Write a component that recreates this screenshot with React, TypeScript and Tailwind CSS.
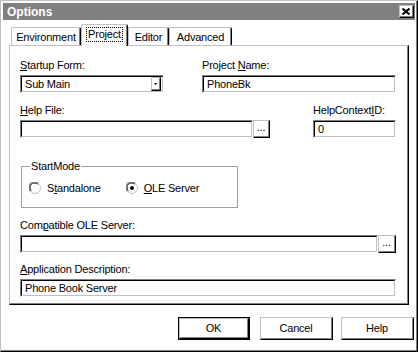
import React from "react";

// Win95-style "Options" dialog, Project tab

const Sunken: React.FC<{ className?: string; children?: React.ReactNode }> = ({ className = "", children }) => (
    <div className={`h-[18px] border-t border-l border-r border-b border-t-[#808080] border-l-[#808080] border-r-white border-b-white ${className}`}>
        <div className="h-full flex items-center pl-[2px] border-t border-l border-r border-b border-t-black border-l-black border-r-[#c0c0c0] border-b-[#c0c0c0] bg-white">
            {children}
        </div>
    </div>
);

const Raised: React.FC<{ className?: string; children?: React.ReactNode }> = ({ className = "", children }) => (
    <div className={`border-t border-l border-r border-b border-t-[#c0c0c0] border-l-[#c0c0c0] border-r-black border-b-black bg-white ${className}`}>
        <div className="h-full w-full flex items-center justify-center border-r border-b border-r-[#808080] border-b-[#808080]">
            {children}
        </div>
    </div>
);

const Label: React.FC<{ children: React.ReactNode; className?: string }> = ({ children, className = "" }) => (
    <div className={`text-[11px] leading-[13px] mb-[3px] ${className}`}>{children}</div>
);

const Radio: React.FC<{ checked?: boolean }> = ({ checked }) => (
    <svg width="12" height="12" viewBox="0 0 12 12" className="shrink-0">
        <circle cx="6" cy="6" r="5.5" fill="white" stroke="#c0c0c0" />
        <path d="M1.2 9.5 A5.5 5.5 0 0 1 9.5 1.2" fill="none" stroke="#808080" />
        <path d="M2.2 8.6 A4.4 4.4 0 0 1 8.6 2.2" fill="none" stroke="black" />
        {checked && <circle cx="6" cy="6" r="2" fill="black" />}
    </svg>
);

const Dots = () => <span className="text-[11px] leading-none -mt-[2px]">...</span>;

export default function App() {
    const tabs = [
        { name: "Environment", w: "w-[70px]" },
        { name: "Project", w: "w-[47px]", active: true },
        { name: "Editor", w: "w-[41px]" },
        { name: "Advanced", w: "w-[63px]" },
    ];

    return (
        <div className="w-[418px] h-[352px] bg-white text-black tracking-[-0.2px] font-['Liberation_Sans',Arial,sans-serif] border-t border-l border-r border-b border-t-[#c0c0c0] border-l-[#c0c0c0] border-r-black border-b-black">
            <div className="h-full pt-[2px] pl-[2px] pr-[1px] border-r border-b border-r-[#808080] border-b-[#808080]">
                {/* title bar */}
                <div className="h-[17px] bg-[#808080] flex items-center justify-between pl-[4px] pr-[1px]">
                    <span className="text-white font-bold text-[12px] leading-none tracking-normal">Options</span>
                    <Raised className="w-[15px] h-[13px]">
                        <svg width="8" height="7" viewBox="0 0 8 7">
                            <path d="M0.5 0.5 L7.5 6.5 M7.5 0.5 L0.5 6.5" stroke="black" strokeWidth="2" />
                        </svg>
                    </Raised>
                </div>

                <div className="pl-[6px] mt-[4px]">
                    {/* tabs */}
                    <div className="flex items-end h-[21px] pl-[2px]">
                        {tabs.map((t) =>
                            t.active ? (
                                <div
                                    key={t.name}
                                    className={`${t.w} h-[22px] -mb-[1px] relative z-10 bg-white rounded-t-[2px] border-t border-l border-r border-t-[#c0c0c0] border-l-[#c0c0c0] border-r-black shadow-[inset_-1px_0_0_#808080] flex justify-center pt-[2px]`}
                                >
                                    <span className="text-[11px] leading-[13px] h-[15px] px-[1px] border border-dotted border-black">
                                        {t.name}
                                    </span>
                                </div>
                            ) : (
                                <div
                                    key={t.name}
                                    className={`${t.w} h-[18px] bg-white rounded-t-[2px] border-t border-l border-r border-t-[#c0c0c0] border-l-[#c0c0c0] border-r-black shadow-[inset_-1px_0_0_#808080] flex justify-center pt-[3px]`}
                                >
                                    <span className="text-[11px] leading-[13px]">{t.name}</span>
                                </div>
                            )
                        )}
                    </div>

                    {/* tab panel */}
                    <div className="w-[400px] h-[260px] border-t border-l border-r border-b border-t-[#c0c0c0] border-l-[#c0c0c0] border-r-black border-b-black shadow-[inset_-1px_-1px_0_#808080] pl-[10px] pt-[13px]">
                        <div className="flex">
                            <div className="w-[144px]">
                                <Label>
                                    <u>S</u>tartup Form:
                                </Label>
                                <Sunken>
                                    <div className="flex-1 flex items-center justify-between h-full">
                                        <span className="text-[11px] leading-none pl-[1px]">Sub Main</span>
                                        <Raised className="w-[10px] h-[14px] mr-[1px]">
                                            <svg width="3" height="2" viewBox="0 0 3 2">
                                                <path d="M0 0 H3 L1.5 2 Z" fill="black" />
                                            </svg>
                                        </Raised>
                                    </div>
                                </Sunken>
                            </div>
                            <div className="w-[194px] ml-[38px]">
                                <Label>
                                    Project <u>N</u>ame:
                                </Label>
                                <Sunken>
                                    <span className="text-[11px] leading-none pl-[1px]">PhoneBk</span>
                                </Sunken>
                            </div>
                        </div>

                        <div className="flex mt-[11px]">
                            <div className="w-[250px]">
                                <Label>
                                    <u>H</u>elp File:
                                </Label>
                                <div className="flex">
                                    <Sunken className="w-[233px]" />
                                    <Raised className="w-[17px] h-[18px]">
                                        <Dots />
                                    </Raised>
                                </div>
                            </div>
                            <div className="w-[83px] ml-[43px]">
                                <Label>
                                    HelpContext<u>I</u>D:
                                </Label>
                                <Sunken>
                                    <span className="text-[11px] leading-none pl-[1px]">0</span>
                                </Sunken>
                            </div>
                        </div>

                        {/* StartMode group */}
                        <div className="relative ml-[1px] mt-[28px] w-[217px] h-[42px] border border-[#a0a0a0] flex items-center pl-[7px] pt-[2px]">
                            <span className="absolute -top-[7px] left-[8px] bg-white px-[1px] text-[11px] leading-[13px]">
                                StartMode
                            </span>
                            <div className="flex items-center gap-[6px]">
                                <Radio />
                                <span className="text-[11px] leading-[13px]">
                                    S<u>t</u>andalone
                                </span>
                            </div>
                            <div className="flex items-center gap-[6px] ml-[25px]">
                                <Radio checked />
                                <span className="text-[11px] leading-[13px]">
                                    <u>O</u>LE Server
                                </span>
                            </div>
                        </div>

                        <div className="mt-[11px] w-[376px]">
                            <Label>
                                Com<u>p</u>atible OLE Server:
                            </Label>
                            <div className="flex">
                                <Sunken className="w-[358px]" />
                                <Raised className="w-[18px] h-[18px]">
                                    <Dots />
                                </Raised>
                            </div>
                        </div>

                        <div className="mt-[10px] w-[376px]">
                            <Label>
                                <u>A</u>pplication Description:
                            </Label>
                            <Sunken>
                                <span className="text-[11px] leading-none pl-[1px]">Phone Book Server</span>
                            </Sunken>
                        </div>
                    </div>

                    {/* buttons */}
                    <div className="flex justify-end mt-[12px] pr-[1px]">
                        <div className="border border-black mr-[10px]">
                            <Raised className="w-[70px] h-[21px]">
                                <span className="text-[11px] leading-none">OK</span>
                            </Raised>
                        </div>
                        <Raised className="w-[73px] h-[23px] mr-[8px]">
                            <span className="text-[11px] leading-none">Cancel</span>
                        </Raised>
                        <Raised className="w-[73px] h-[23px]">
                            <span className="text-[11px] leading-none">Help</span>
                        </Raised>
                    </div>
                </div>
            </div>
        </div>
    );
}
